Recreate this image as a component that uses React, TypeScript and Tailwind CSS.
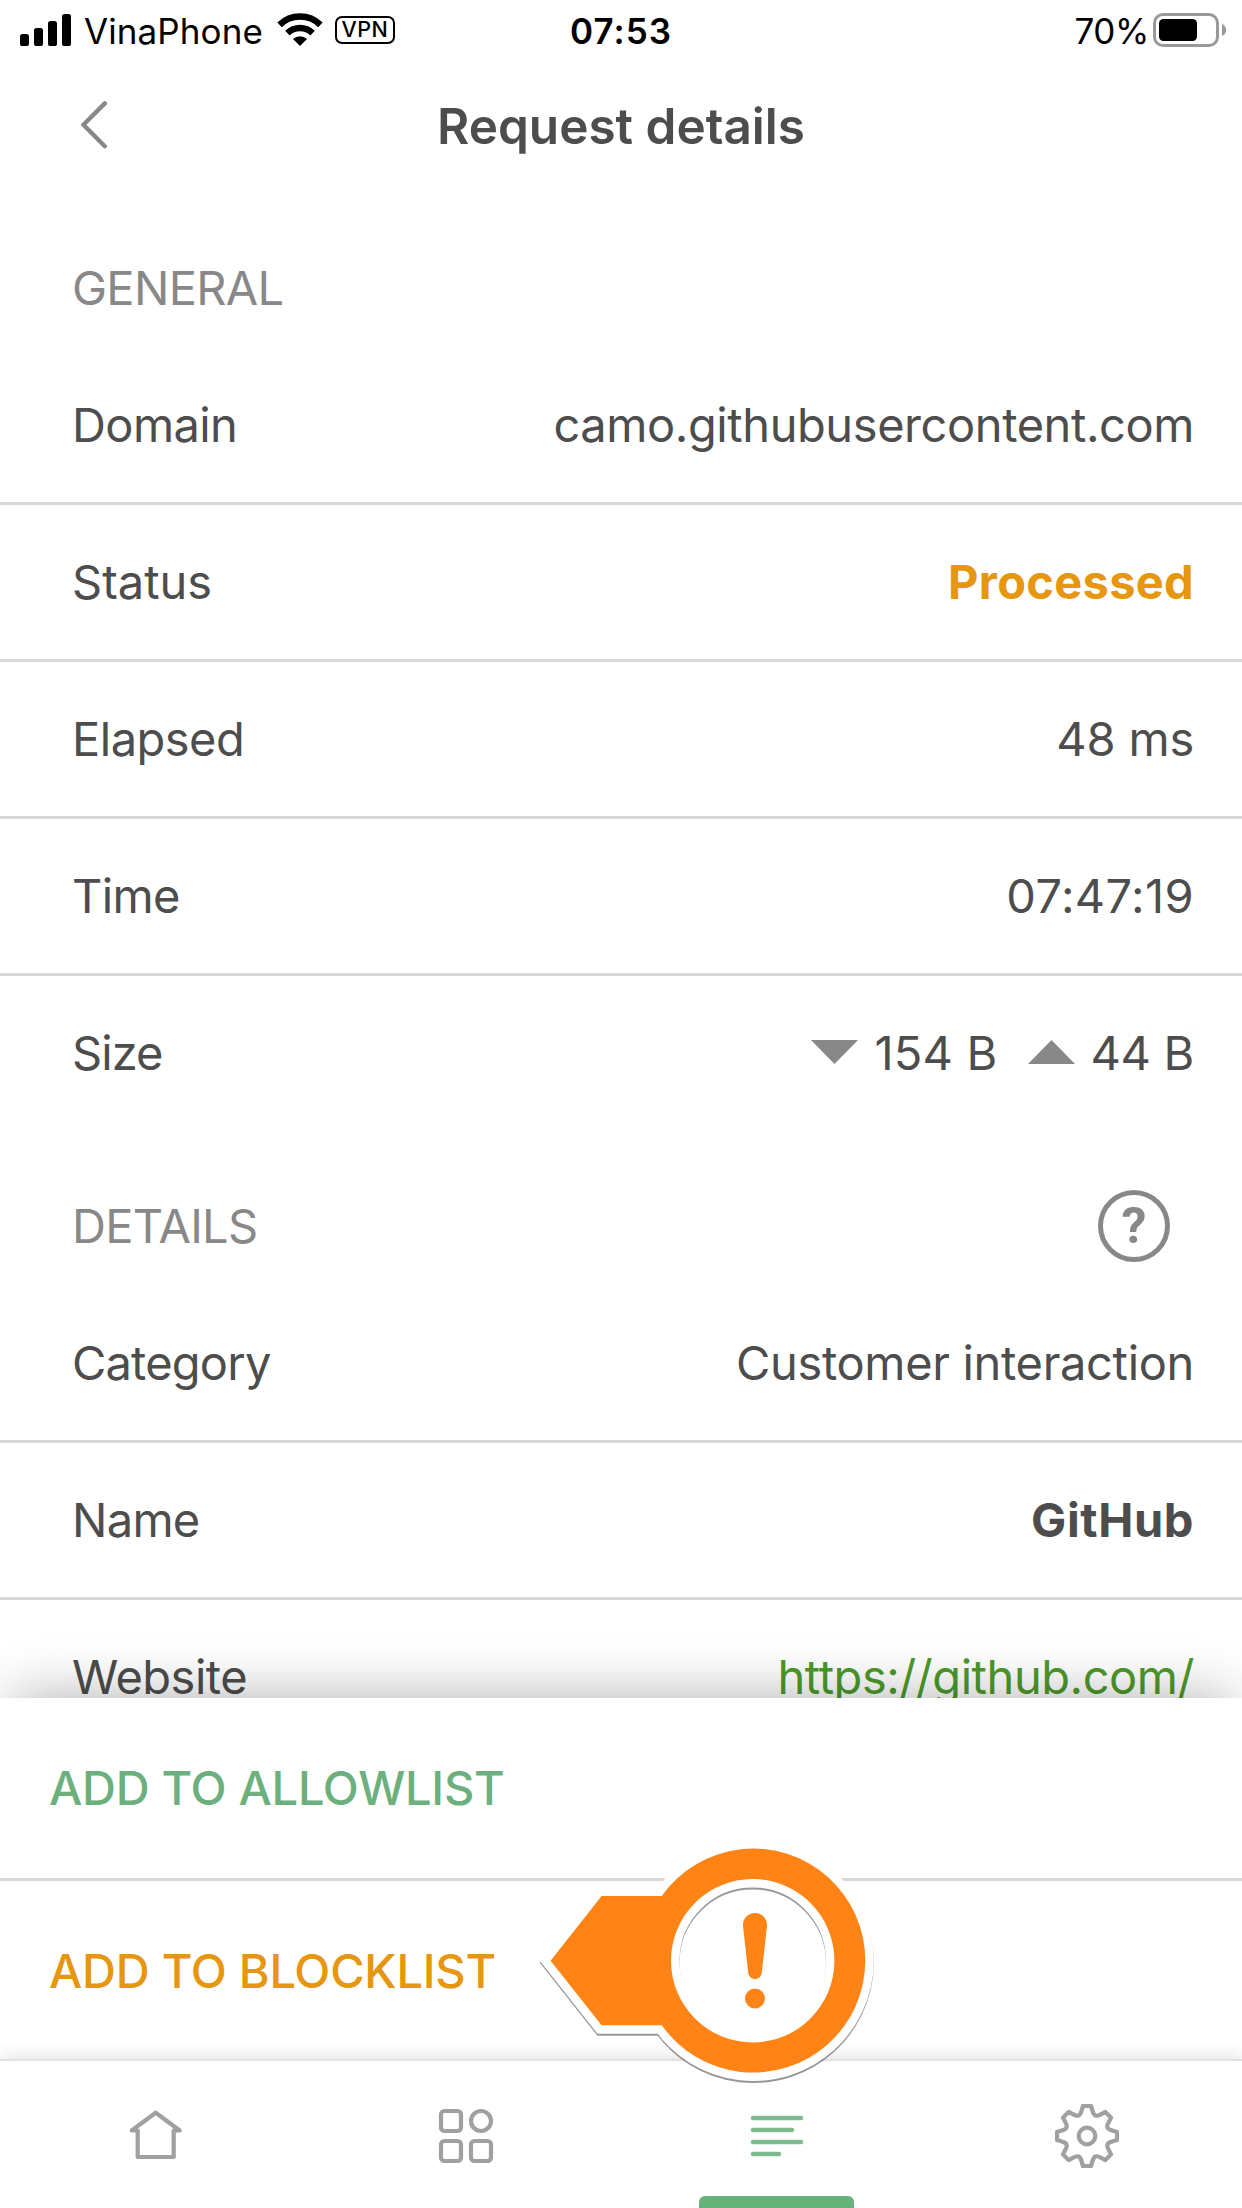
import type { ReactNode } from 'react';

function SignalIcon() {
  return (
    <svg width="51" height="32" viewBox="0 0 51 32" fill="#000">
      <rect x="0" y="20" width="9" height="12" rx="2.6" />
      <rect x="14" y="14" width="9" height="18" rx="2.6" />
      <rect x="28" y="7" width="9" height="25" rx="2.6" />
      <rect x="42" y="0" width="9" height="32" rx="2.6" />
    </svg>
  );
}

function WifiIcon() {
  return (
    <svg width="46" height="34" viewBox="-23 -33 46 34" fill="none" stroke="#000" strokeWidth="6.6">
      <path d="M-20.4 -21.2A29.4 29.4 0 0 1 20.4 -21.2" />
      <path d="M-12.6 -12.8A18 18 0 0 1 12.6 -12.8" />
      <path d="M-7 -7A10 10 0 0 1 7 -7L0 0Z" fill="#000" stroke="none" />
    </svg>
  );
}

function BatteryIcon() {
  return (
    <svg width="73" height="34" viewBox="0 0 73 34">
      <rect x="1.5" y="1.5" width="63" height="31" rx="8.5" fill="none" stroke="#999" strokeWidth="3" />
      <rect x="6" y="6" width="38" height="22" rx="4.5" fill="#000" />
      <path d="M69 11C74.5 13 74.5 21 69 23Z" fill="#999" />
    </svg>
  );
}

function StatusBar() {
  return (
    <div className="grid h-[62px] grid-cols-[1fr_auto_1fr] items-center text-[35px] leading-none text-black">
      <div className="flex items-center pl-5">
        <div className="-mt-0.5">
          <SignalIcon />
        </div>
        <span className="ml-[13px] tracking-[0.1px]">VinaPhone</span>
        <div className="-mt-0.5 ml-[14px]">
          <WifiIcon />
        </div>
        <span className="-mt-0.5 ml-3 flex h-7 w-[60px] items-center justify-center rounded-[7px] border-[2.5px] border-black text-[21.5px] font-medium tracking-[0.5px]">
          VPN
        </span>
      </div>
      <span className="font-semibold tracking-[1px]">07:53</span>
      <div className="flex items-center justify-end pr-4">
        <span className="mr-[4px] tracking-[-0.4px]">70%</span>
        <div className="-mt-0.5">
          <BatteryIcon />
        </div>
      </div>
    </div>
  );
}

function TitleBar() {
  return (
    <div className="grid h-32 grid-cols-[1fr_auto_1fr] items-center">
      <button className="-mt-0.5 justify-self-start pl-[80px]" aria-label="Back">
        <svg width="28" height="48" viewBox="0 0 28 48" fill="none" stroke="#888" strokeWidth="4.4" strokeLinecap="round" strokeLinejoin="round">
          <path d="M24.8 2.4L3.4 23.8L24.8 45.2" />
        </svg>
      </button>
      <h1 className="mt-0.5 text-[49.5px] leading-none font-semibold text-[#4d4d4d]">Request details</h1>
    </div>
  );
}

function SectionHeader({ children, action }: { children: ReactNode; action?: ReactNode }) {
  return (
    <div className="flex h-[120px] items-center justify-between px-[72px] text-[#888]">
      <h2 className="-mt-0.5">{children}</h2>
      {action}
    </div>
  );
}

function Row({ label, children, last }: { label: ReactNode; children: ReactNode; last?: boolean }) {
  return (
    <div
      className={
        last
          ? 'flex h-[154px] items-center justify-between pr-12 pb-0.5 pl-[72px]'
          : 'flex h-[157px] items-center justify-between border-b-[3px] border-[#d8d8d8] pr-12 pb-0.5 pl-[72px]'
      }
    >
      {label}
      {children}
    </div>
  );
}

function Callout() {
  return (
    <svg
      className="absolute top-[1834px] left-[533px] z-20 drop-shadow-[0_2px_0.6px_rgba(60,64,70,0.55)]"
      width="352"
      height="256"
      viewBox="534 1834 352 256"
    >
      <path
        d="M551.6 1960.7L602.6 1896H662.8A112 112 0 1 1 662.8 2025.2H602.6Z M753.7 1879A81.7 81.7 0 1 0 753.7 2042.4A81.7 81.7 0 1 0 753.7 1879Z"
        fill="#fff"
        fillRule="evenodd"
        stroke="#fff"
        strokeWidth="17"
      />
      <path
        d="M551.6 1960.7L602.6 1896H662.8A112 112 0 1 1 662.8 2025.2H602.6Z M753.7 1879A81.7 81.7 0 1 0 753.7 2042.4A81.7 81.7 0 1 0 753.7 1879Z"
        fill="#ff8415"
        fillRule="evenodd"
      />
    </svg>
  );
}

function ExclamationMark() {
  return (
    <svg className="absolute top-[1912px] left-[740px] z-20" width="30" height="98" viewBox="740 1912 30 98" fill="#ff8415">
      <path d="M743 1926C742.6 1918.5 748 1913 755 1913S767.4 1918.5 767 1926L761.8 1972.5C761.4 1976.5 758.6 1979 755 1979S748.6 1976.5 748.2 1972.5Z" />
      <circle cx="755" cy="1998.5" r="10" />
    </svg>
  );
}

function HomeIcon() {
  return (
    <svg width="64" height="64" viewBox="-32 -31 64 64" fill="none" stroke="#a0a0a0" strokeWidth="4.2" strokeLinecap="round" strokeLinejoin="round">
      <path d="M-17.3 -4.5H-23.3L0.7 -22.3L24.7 -4.5H18.7V22H-17.3V-4.5" />
    </svg>
  );
}

function GridIcon() {
  return (
    <svg width="64" height="64" viewBox="-32 -32 64 64" fill="none" stroke="#a0a0a0" strokeWidth="4.2">
      <rect x="-25" y="-25" width="20" height="20" rx="3.5" />
      <circle cx="15" cy="-15" r="10" />
      <rect x="-25" y="5" width="20" height="20" rx="3.5" />
      <rect x="5" y="5" width="20" height="20" rx="3.5" />
    </svg>
  );
}

function ListIcon() {
  return (
    <svg width="64" height="64" viewBox="-32 -32 64 64" fill="none" stroke="#7dba8e" strokeWidth="4.4" strokeLinecap="round">
      <path d="M-23 -18H25M-23 -6H16M-23 6H25M-23 18H3" />
    </svg>
  );
}

const toothProfile: [number, number][] = [
  [-4, -30],
  [4, -30],
  [5.6, -25],
  [7.3, -17.7],
  [13.7, -21.6],
];

const gearPath =
  Array.from({ length: 8 }, (_, i) => {
    const angle = (i * Math.PI) / 4;
    const [a, b, c, d, e] = toothProfile.map(
      ([x, y]) =>
        `${(x * Math.cos(angle) - y * Math.sin(angle)).toFixed(2)} ${(x * Math.sin(angle) + y * Math.cos(angle)).toFixed(2)}`,
    );
    return `${i === 0 ? 'M' : 'L'}${a}L${b}L${c}Q${d} ${e}`;
  }).join('') + 'Z';

function GearIcon() {
  return (
    <svg width="64" height="64" viewBox="-32 -32 64 64" fill="none" stroke="#a0a0a0" strokeWidth="4.2" strokeLinejoin="round">
      <path d={gearPath} />
      <circle r="8.3" />
    </svg>
  );
}

function NavItem({ icon, active }: { icon: ReactNode; active?: boolean }) {
  return (
    <div className="flex flex-col items-center justify-between pt-[43px]">
      {icon}
      {active && <div className="h-3 w-[155px] rounded-t-[6px] bg-[#67b279]" />}
    </div>
  );
}

export default function App() {
  return (
    <div className="relative flex h-[2208px] w-[1242px] flex-col overflow-hidden bg-white font-['Inter',sans-serif] text-[47px] leading-none whitespace-nowrap text-[#4d4d4d]">
      <StatusBar />
      <TitleBar />

      <main className="min-h-0 flex-1 overflow-hidden pt-[38px]">
        <SectionHeader>
          <span className="tracking-[-0.7px]">GENERAL</span>
        </SectionHeader>
        <Row label={<span className="tracking-[-0.6px]">Domain</span>}>
          <span className="tracking-[-0.42px]">camo.githubusercontent.com</span>
        </Row>
        <Row label={<span>Status</span>}>
          <span className="font-bold tracking-[0.3px] text-[#e6960f]">Processed</span>
        </Row>
        <Row label={<span className="tracking-[-0.5px]">Elapsed</span>}>
          <span className="tracking-[-0.2px]">48 ms</span>
        </Row>
        <Row label={<span className="tracking-[-0.6px]">Time</span>}>
          <span className="tracking-[0.4px]">07:47:19</span>
        </Row>
        <Row label={<span className="tracking-[-0.9px]">Size</span>} last>
          <div className="flex items-center">
            <svg width="47" height="24" viewBox="0 0 47 24" fill="#888">
              <path d="M0 0H47L23.5 24Z" />
            </svg>
            <span className="ml-4 tracking-[0.2px]">154 B</span>
            <svg className="ml-[30px]" width="47" height="24" viewBox="0 0 47 24" fill="#888">
              <path d="M0 24H47L23.5 0Z" />
            </svg>
            <span className="ml-4 tracking-[-0.3px]">44 B</span>
          </div>
        </Row>

        <div className="mt-9">
          <SectionHeader
            action={
              <button className="flex size-[72px] items-center justify-center rounded-full border-[5px] border-[#888] font-['Roboto',sans-serif] text-[50px] font-bold">
                ?
              </button>
            }
          >
            <span className="tracking-[-0.7px]">DETAILS</span>
          </SectionHeader>
        </div>
        <Row label={<span className="tracking-[-0.8px]">Category</span>}>
          <span className="tracking-[-0.33px]">Customer interaction</span>
        </Row>
        <Row label={<span className="tracking-[-0.7px]">Name</span>}>
          <span className="font-bold tracking-[0.6px]">GitHub</span>
        </Row>
        <Row label={<span className="tracking-[-0.5px]">Website</span>}>
          <a className="tracking-[-0.45px] text-[#4d9a2a]">https://github.com/</a>
        </Row>
      </main>

      <div className="relative z-10 bg-white font-medium shadow-[0_-12px_54px_-12px_rgba(0,0,0,0.32)]">
        <div className="flex h-[183px] items-center border-b-[3px] border-[#d8d8d8] pb-0.5 pl-[49px] tracking-[-0.28px] text-[#6bb07d]">
          ADD TO ALLOWLIST
        </div>
        <div className="flex h-[180px] items-center pb-0.5 pl-[49px] tracking-[-0.25px] text-[#e6960f]">ADD TO BLOCKLIST</div>
      </div>

      <nav className="relative z-10 grid h-[147px] shrink-0 grid-cols-4 bg-white shadow-[0_-2px_0_#e2e2e2,0_0_20px_rgba(0,0,0,0.18)]">
        <NavItem icon={<HomeIcon />} />
        <NavItem icon={<GridIcon />} />
        <NavItem icon={<ListIcon />} active />
        <NavItem icon={<GearIcon />} />
      </nav>

      <Callout />
      <ExclamationMark />
    </div>
  );
}
